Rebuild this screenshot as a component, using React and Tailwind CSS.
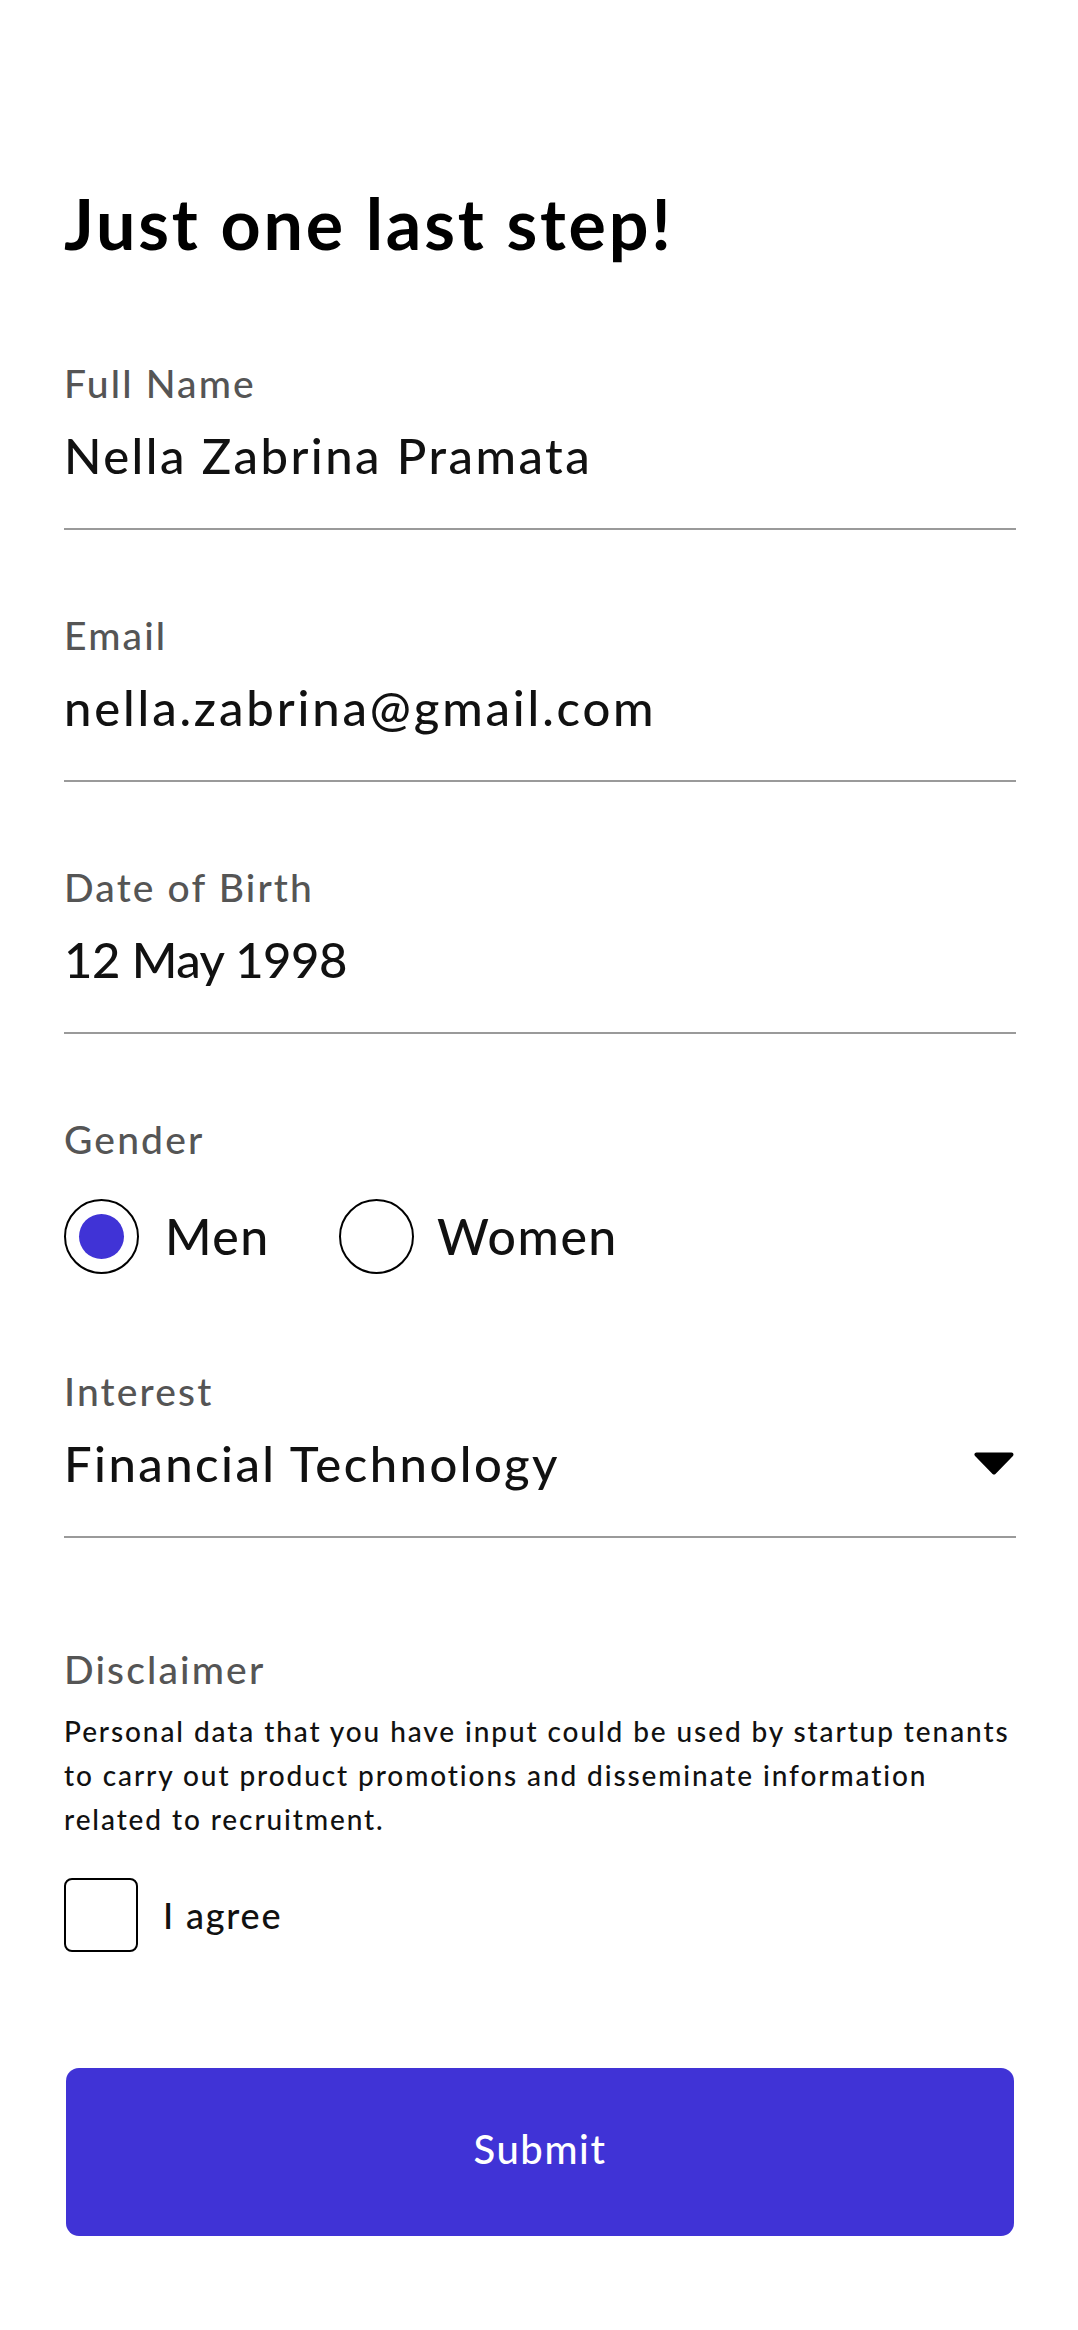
import React from "react";

const FONT = { fontFamily: "Lato, 'Noto Sans', sans-serif" };

function Field({ label, value, valueClass = "tracking-[0.05em]" }) {
  return (
    <div className="border-b-2 border-[#9a9a9a] pb-[43px]">
      <div className="h-[48px] text-[39px] font-medium leading-[48px] tracking-[0.055em] text-[#555555]">{label}</div>
      <div className={"mt-[18px] h-[60px] text-[49px] font-medium leading-[60px] text-[#111111] " + valueClass}>{value}</div>
    </div>
  );
}

export default function App() {
  return (
    <div className="min-h-[2330px] w-full bg-white pl-16 pr-[62px] pt-[183px]" style={FONT}>
      <h1 className="h-[80px] text-[70px] font-bold leading-[80px] tracking-[0.04em] text-black">Just one last step!</h1>

      <div className="mt-[96px]">
        <Field label="Full Name" value="Nella Zabrina Pramata" />
      </div>
      <div className="mt-[81px]">
        <Field label="Email" value="nella.zabrina@gmail.com" valueClass="tracking-[0.058em]" />
      </div>
      <div className="mt-[81px]">
        <Field label="Date of Birth" value="12 May 1998" valueClass="tracking-[-0.01em]" />
      </div>

      <div className="mt-[81px]">
        <div className="h-[48px] text-[39px] font-medium leading-[48px] tracking-[0.055em] text-[#555555]">Gender</div>
        <div className="mt-[36px] flex items-center">
          <div className="flex items-center">
            <div className="flex h-[75px] w-[75px] items-center justify-center rounded-full border-2 border-black">
              <div className="h-[45px] w-[45px] rounded-full bg-[#4033d6]" />
            </div>
            <span className="ml-[26px] w-[174px] text-[50px] font-medium leading-[75px] tracking-[0.03em] text-[#111111]">Men</span>
          </div>
          <div className="flex items-center">
            <div className="h-[75px] w-[75px] rounded-full border-2 border-black" />
            <span className="ml-[23px] text-[50px] font-medium leading-[75px] tracking-[0.03em] text-[#111111]">Women</span>
          </div>
        </div>
      </div>

      <div className="mt-[93px] border-b-2 border-[#9a9a9a] pb-[43px]">
        <div className="h-[48px] text-[39px] font-medium leading-[48px] tracking-[0.055em] text-[#555555]">Interest</div>
        <div className="mt-[18px] flex h-[60px] items-center justify-between">
          <span className="text-[49px] font-medium leading-[60px] tracking-[0.05em] text-[#111111]">Financial Technology</span>
          <svg width="40" height="23" viewBox="0 0 40 23" className="mr-[2px]">
            <path d="M2.5 2.5 H37.5 L20 20.5 Z" fill="#000" stroke="#000" strokeWidth="4" strokeLinejoin="round" />
          </svg>
        </div>
      </div>

      <div className="mt-[107px]">
        <div className="h-[48px] text-[39px] font-medium leading-[48px] tracking-[0.055em] text-[#555555]">Disclaimer</div>
        <p className="mt-[16px] whitespace-nowrap text-[28px] font-medium leading-[44px] tracking-[0.068em] text-[#111111]">
          Personal data that you have input could be used by startup tenants
          <br />
          to carry out product promotions and disseminate information
          <br />
          related to recruitment.
        </p>
        <label className="mt-[37px] flex items-center">
          <span className="h-[74px] w-[74px] rounded-[8px] border-2 border-black" />
          <span className="ml-[25px] text-[36px] font-medium leading-[48px] tracking-[0.05em] text-[#111111]">I agree</span>
        </label>
      </div>

      <button
        type="button"
        className="mx-[2px] mt-[116px] flex h-[168px] w-[calc(100%-4px)] items-center justify-center rounded-[13px] bg-[#4033d6] pb-[6px] text-[40px] font-medium tracking-[0.04em] text-white"
      >
        Submit
      </button>
    </div>
  );
}
